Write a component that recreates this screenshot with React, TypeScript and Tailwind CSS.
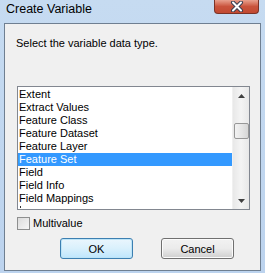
import React from 'react';

const items = [
  'Extent',
  'Extract Values',
  'Feature Class',
  'Feature Dataset',
  'Feature Layer',
  'Feature Set',
  'Field',
  'Field Info',
  'Field Mappings',
];

const CloseGlyph = () => (
  <svg width="14" height="11" viewBox="0 0 14 11">
    <path d="M3 1.5 L11 9.5 M11 1.5 L3 9.5" stroke="#3b3f52" strokeWidth="4" strokeLinecap="round" />
    <path d="M3 1.5 L11 9.5 M11 1.5 L3 9.5" stroke="#ffffff" strokeWidth="2" strokeLinecap="round" />
  </svg>
);

export default function App() {
  const font = { fontFamily: '"Liberation Sans", Arial, sans-serif' };

  return (
    <div
      className="w-[265px] h-[273px] bg-gradient-to-b from-[#c6dbf1] to-[#bcd3ee] flex flex-col text-black overflow-hidden"
      style={font}
    >
      {/* title bar */}
      <div className="h-[23px] flex items-start shrink-0">
        <span className="pl-[6px] pt-[1px] text-[12.5px] leading-[16px] text-black">Create Variable</span>
        <div className="ml-auto mr-[6px] w-[45px] h-[14px] rounded-b-[4px] border border-t-0 border-[#7b3327] bg-gradient-to-b from-[#e8a08e] via-[#c9533c] to-[#c24a32] flex items-center justify-center">
          <CloseGlyph />
        </div>
      </div>

      {/* client area */}
      <div className="ml-[4px] w-[257px] h-[248px] border border-[#6f7f91] bg-[#f0f0f0] flex flex-col text-[11px]">
        <div className="pl-[11px] pt-[12px] leading-[15px]">Select the variable data type.</div>

        {/* listbox */}
        <div className="ml-[12px] mt-[35px] w-[233px] h-[124px] border border-[#828790] bg-white flex">
          <div className="flex-1 pt-[1px] overflow-hidden">
            {items.map((item) => (
              <div
                key={item}
                className={
                  item === 'Feature Set'
                    ? 'h-[13px] leading-[13px] pl-[1px] bg-[#3399ff] text-white'
                    : 'h-[13px] leading-[13px] pl-[1px]'
                }
              >
                {item}
              </div>
            ))}
            <div className="ml-[2px] mt-[1px] w-[1px] h-[2px] bg-[#333]" />
          </div>
          <div className="w-[17px] bg-gradient-to-r from-[#e8e8e8] via-[#f4f4f4] to-[#e8e8e8] border-l border-[#f0f0f0] flex flex-col items-center">
            <div className="h-[17px] flex items-center justify-center">
              <svg width="7" height="4" viewBox="0 0 7 4">
                <path d="M0 4 L3.5 0 L7 4 Z" fill="#404040" />
              </svg>
            </div>
            <div className="mt-[19px] w-[15px] h-[16px] rounded-[2px] border border-[#979797] bg-gradient-to-r from-[#f2f2f2] via-[#e6e6e6] to-[#d6d6d6]" />
            <div className="mt-auto h-[17px] flex items-center justify-center">
              <svg width="7" height="4" viewBox="0 0 7 4">
                <path d="M0 0 L7 0 L3.5 4 Z" fill="#404040" />
              </svg>
            </div>
          </div>
        </div>

        {/* checkbox */}
        <label className="ml-[12px] mt-[7px] flex items-center gap-[2px] h-[13px]">
          <span className="w-[13px] h-[13px] border border-[#8e8f8f] bg-gradient-to-br from-[#dcdcdc] to-[#f6f6f6]" />
          <span className="leading-[13px] ml-[1px]">Multivalue</span>
        </label>

        {/* buttons */}
        <div className="mt-[8px] flex gap-[28px] pl-[55px]">
          <button className="w-[73px] h-[21px] rounded-[3px] border border-[#3c7fb1] bg-gradient-to-b from-[#eaf6fd] via-[#d9f0fc] to-[#bee6fd] shadow-[inset_0_0_0_1px_#bde4f7] text-[11px] leading-[18px]">
            OK
          </button>
          <button className="w-[73px] h-[21px] rounded-[3px] border border-[#707070] bg-gradient-to-b from-[#f2f2f2] via-[#ebebeb] to-[#cfcfcf] shadow-[inset_0_0_0_1px_#fbfbfb] text-[11px] leading-[18px]">
            Cancel
          </button>
        </div>
      </div>
    </div>
  );
}
